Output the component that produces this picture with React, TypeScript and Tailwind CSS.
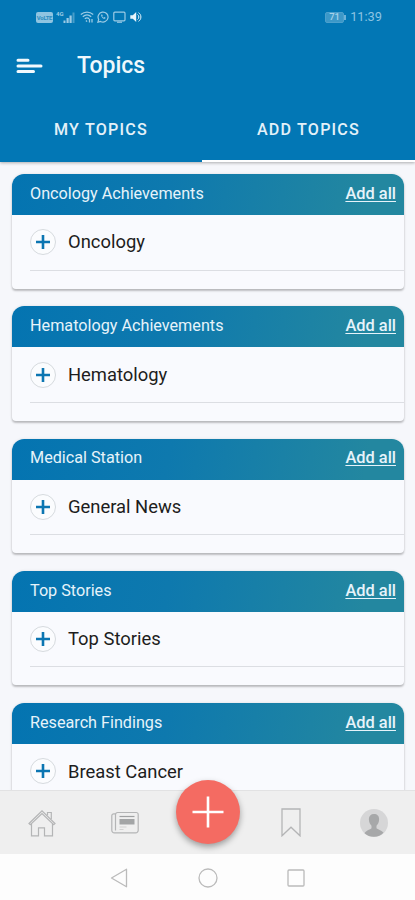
import { useState } from 'react';

import clsx from 'clsx';

interface TopicGroup {
    title: string;
    topics: string[];
}

const GROUPS: TopicGroup[] = [
    { title: 'Oncology Achievements', topics: ['Oncology'] },
    { title: 'Hematology Achievements', topics: ['Hematology'] },
    { title: 'Medical Station', topics: ['General News'] },
    { title: 'Top Stories', topics: ['Top Stories'] },
    { title: 'Research Findings', topics: ['Breast Cancer'] },
];

const TABS = ['MY TOPICS', 'ADD TOPICS'];

function StatusBar() {
    return (
        <div className="flex h-[34px] items-center justify-between pr-[33px] pl-[36px] text-[#9ccbe5]">
            <div className="flex items-center">
                <span className="flex h-[11px] w-[17px] items-center justify-center rounded-[2px] bg-[#8fc4e1] text-[6px] font-bold tracking-[-0.3px] text-[#2a8cc0]">
                    VoLTE
                </span>
                {/* Mobile signal */}
                <svg width="20" height="12" viewBox="0 0 20 12" className="ml-[3px]" fill="currentColor">
                    <text x="0" y="5" fontSize="6" fontWeight="700">
                        4G
                    </text>
                    <path d="M7.500 9.500h2V12h-2zM10.500 7h2.200v5h-2.200zM13.500 4.500h2.200V12h-2.200z" />
                    <path d="M16.500 1.500h2V12h-2z" opacity="0.45" />
                </svg>
                {/* Wifi */}
                <svg
                    width="14"
                    height="12"
                    viewBox="0 0 14 12"
                    className="ml-[4px]"
                    fill="none"
                    stroke="currentColor"
                    strokeWidth="1.3"
                >
                    <path d="M.8 3.500C4.500.3 9.500.3 13.200 3.500M2.800 5.700c2.500-2.200 5.900-2.200 8.400 0M4.800 7.800c1.300-1.100 3.100-1.100 4.400 0" />
                    <path d="M6 9.500l1 1.200M9.500 8v3.500M12 11.500V8" />
                </svg>
                {/* WhatsApp */}
                <svg
                    width="12"
                    height="12"
                    viewBox="0 0 12 12"
                    className="ml-[3px]"
                    fill="none"
                    stroke="currentColor"
                    strokeWidth="1.2"
                >
                    <path d="M.9 11.200l.8-2.700A5 5 0 1 1 3.600 10.400z" />
                    <path d="M4.300 3.500c-.8 1.800 1.800 4.800 3.800 4.300l.5-1-1.300-.7-.7.6c-.7-.3-1.200-.9-1.400-1.500l.5-.6-.5-1.100z" fill="currentColor" stroke="none" />
                </svg>
                {/* Cast screen */}
                <svg
                    width="13"
                    height="12"
                    viewBox="0 0 13 12"
                    className="ml-[4px]"
                    fill="none"
                    stroke="currentColor"
                    strokeWidth="1.2"
                >
                    <rect x=".8" y="1.200" width="11.200" height="8.600" rx="1" />
                    <path d="M4 11.200h5" />
                </svg>
                {/* Volume */}
                <svg width="12" height="12" viewBox="0 0 12 12" className="ml-[4px] text-[#e8f5fc]" fill="currentColor">
                    <path d="M.3 4.200h2.500L6.200 1v10L2.800 7.800H.3z" />
                    <path d="M7.500 3.500c1.800 1 1.800 4 0 5M8.500 1.700c3.200 1.800 3.200 6.800 0 8.600" fill="none" stroke="currentColor" />
                </svg>
            </div>
            <div className="flex items-center text-[#8cc4e2]">
                <span className="flex h-[11px] w-[19px] items-center justify-center rounded-[2px] border border-[#4ca0cd] bg-[#3c98c8] text-[9.5px] leading-none font-medium text-[#a6d2ea]">
                    71
                </span>
                <span className="mr-[4px] h-[5px] w-[2px] bg-[#6db2d8]" />
                <span className="text-[12.8px]">11:39</span>
            </div>
        </div>
    );
}

function AddTopicButton({ label }: { label: string }) {
    return (
        <button
            type="button"
            aria-label={`Add ${label}`}
            className="flex size-[26px] items-center justify-center rounded-full border border-[#d6dade] bg-[#fbfcfe]"
        >
            <svg width="14" height="14" viewBox="0 0 14 14" stroke="#0c76b2" strokeWidth="2.600">
                <path d="M7 0v14M0 7h14" />
            </svg>
        </button>
    );
}

function TopicCard({ title, topics }: TopicGroup) {
    return (
        <section className="h-[114.5px] shrink-0 overflow-hidden rounded-t-[12px] rounded-b-[4px] bg-[#f9fafe] shadow-[0_2px_2px_rgba(0,0,0,0.22),0_0_3px_rgba(0,0,0,0.1)]">
            <header className="flex h-[41px] items-center justify-between bg-linear-[100deg,#0474b1_0%,#0e79ae_40%,#2387a0_90%] pr-2 pb-px pl-[18px] text-[16.2px] text-[#e6f3fa]">
                <h2>{title}</h2>
                <button type="button" className="text-[16.4px] font-medium underline underline-offset-2">
                    Add all
                </button>
            </header>
            <ul className="pl-[18px]">
                {topics.map((topic) => (
                    <li key={topic} className="flex h-[55.5px] items-center gap-3 border-b border-[#dcdee3] text-[18.4px] text-[#1d1d20]">
                        <AddTopicButton label={topic} />
                        {topic}
                    </li>
                ))}
            </ul>
        </section>
    );
}

function BottomNav() {
    return (
        <nav className="relative grid h-[64px] shrink-0 grid-cols-5 items-center justify-items-center border-t border-[#e2e2e3] bg-[#efefef] text-[#b4b5b6]">
            {/* Home */}
            <svg width="28" height="28" viewBox="0 0 28 28" fill="none" stroke="currentColor" strokeWidth="1.2">
                <path d="M1 14.500L14 1.800l13 12.700-1.300 1.200L14 4.500 2.300 15.700z" />
                <path d="M19.500 6.200V3.500h3.800v6.500" />
                <path d="M3.500 15v11.800h7v-8h6v8h8V15" />
            </svg>
            {/* News */}
            <svg width="28" height="24" viewBox="0 0 28 24" fill="none" stroke="currentColor" strokeWidth="1.200">
                <path d="M4.500 2.800H2.800A2 2 0 0 0 .8 4.800v14.500a2.500 2.500 0 0 0 2.500 2.500h21.400a2.500 2.500 0 0 0 2.500-2.500V3.500a2 2 0 0 0-2-2H6.500a2 2 0 0 0-2 2v16" />
                <path d="M8.500 5.500h15" stroke="#9fa1a2" />
                <path d="M8.500 8h15v5.500h-15z" fill="#a3a5a6" stroke="none" />
                <path d="M8.500 16h7M8.500 18.500h4" opacity="0.5" />
            </svg>
            <button
                type="button"
                aria-label="Create"
                className="absolute top-[-11px] left-[176px] flex size-[64px] items-center justify-center rounded-full bg-[#f46b62] shadow-[0_3px_6px_rgba(0,0,0,0.35)]"
            >
                <svg width="32" height="32" viewBox="0 0 32 32" stroke="#fff" strokeWidth="2.600">
                    <path d="M16 .5v31M.5 16h31" />
                </svg>
            </button>
            {/* Bookmark */}
            <svg
                width="20"
                height="29"
                viewBox="0 0 20 29"
                className="col-start-4"
                fill="none"
                stroke="currentColor"
                strokeWidth="1.300"
            >
                <path d="M1 1h18v26.800l-9-8.600-9 8.600z" />
            </svg>
            {/* Profile */}
            <svg width="28" height="28" viewBox="0 0 28 28">
                <circle cx="14" cy="14" r="14" fill="#d6d6d7" />
                <path
                    d="M14 5c3.400 0 5.300 2.200 5.100 5.600-.1 2.800-1.200 5-2.600 6.200v2.400c1.500 1.400 4.500 1.500 7 4.600A14 14 0 0 1 4.500 24.200c2.500-3.500 5.500-3.600 7-5v-2.400c-1.400-1.200-2.500-3.400-2.600-6.200C8.700 7.200 10.600 5 14 5z"
                    fill="#a7a8a9"
                />
            </svg>
        </nav>
    );
}

function SystemNav() {
    return (
        <div className="flex h-[46px] shrink-0 items-center justify-between bg-[#fdfdfd] px-[110px] pt-[2px]">
            <svg width="18" height="20" viewBox="0 0 18 20" fill="none" stroke="#bbb" strokeWidth="1.300">
                <path d="M16.500 1.200v17.600L1.500 10z" strokeLinejoin="round" />
            </svg>
            <svg width="20" height="20" viewBox="0 0 20 20" fill="none" stroke="#bbb" strokeWidth="1.300">
                <circle cx="10" cy="10" r="9" />
            </svg>
            <svg width="18" height="18" viewBox="0 0 18 18" fill="none" stroke="#bbb" strokeWidth="1.300">
                <rect x="1" y="1" width="16" height="16" rx="1" />
            </svg>
        </div>
    );
}

export default function App() {
    const [activeTab, setActiveTab] = useState(1);

    return (
        <div className="flex h-[900px] w-[415px] flex-col overflow-hidden bg-[#f6f7fb] font-[Roboto,sans-serif]">
            <div className="z-10 h-[162px] shrink-0 bg-[#0277b5] shadow-[0_1px_3px_rgba(0,0,0,0.3)]">
                <StatusBar />
                <div className="flex h-[64px] items-center pl-[16px]">
                    <button type="button" aria-label="Menu">
                        <svg width="27" height="16" viewBox="0 0 27 16" stroke="#f2f9fd" strokeWidth="3" strokeLinecap="round">
                            <path d="M2 2.200h10M2 8h23M2 13.500h15.500" />
                        </svg>
                    </button>
                    <h1 className="ml-[34px] pt-px text-[23px] font-medium text-[#f0f8fc]">Topics</h1>
                </div>
                <div className="flex h-[64px]">
                    {TABS.map((tab, index) => (
                        <button
                            key={tab}
                            type="button"
                            onClick={() => setActiveTab(index)}
                            className={clsx(
                                'border-b-2 pt-[2px] text-[16.1px] font-medium tracking-[1.2px] text-[#e3f1f9]',
                                index === 0 ? 'w-[202px]' : 'w-[213px]',
                                activeTab === index ? 'border-white' : 'border-transparent',
                            )}
                        >
                            {tab}
                        </button>
                    ))}
                </div>
            </div>

            <main className="flex min-h-0 flex-1 flex-col gap-[17.8px] overflow-hidden pt-[12px] pr-[11px] pl-[12px]">
                {GROUPS.map((group) => (
                    <TopicCard key={group.title} {...group} />
                ))}
            </main>

            <BottomNav />
            <SystemNav />
        </div>
    );
}
